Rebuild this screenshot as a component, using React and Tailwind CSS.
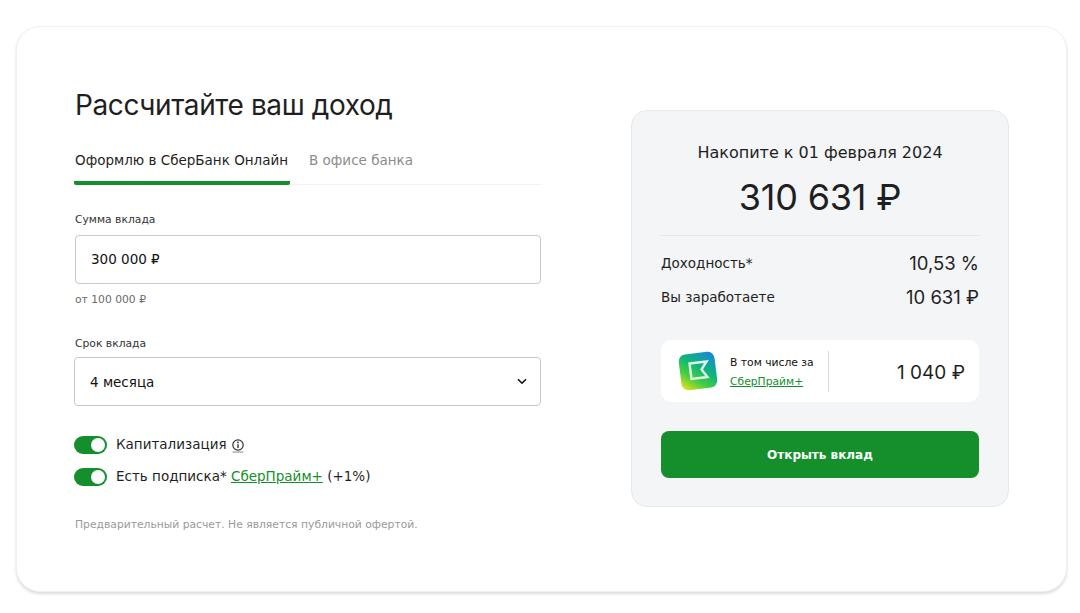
import React from "react";

const body = "font-['DejaVu_Sans','Noto_Sans',sans-serif]";
const head = "font-['Inter','Noto_Sans',sans-serif]";

function Toggle() {
  return (
    <div className="w-[33px] h-[18px] rounded-full bg-[#148F2B] flex items-center justify-end pr-[2px] shrink-0">
      <div className="w-[14px] h-[14px] rounded-full bg-white" />
    </div>
  );
}

function PrimeLogo() {
  return (
    <svg width="42" height="42" viewBox="0 0 42 42" className="shrink-0">
      <defs>
        <linearGradient id="pg" x1="0.1" y1="1" x2="0.9" y2="0">
          <stop offset="0" stopColor="#e4e21f" />
          <stop offset="0.3" stopColor="#45cf3f" />
          <stop offset="0.6" stopColor="#0db47a" />
          <stop offset="1" stopColor="#1a86e0" />
        </linearGradient>
      </defs>
      <rect x="3" y="3" width="36" height="36" rx="7" fill="url(#pg)" transform="rotate(-7 21 21)" />
      <path d="M12.5 13.5 L29.5 11.5 L24.5 19.5 L30.5 27 L14.5 29 Z" fill="none" stroke="#dff5e6" strokeWidth="2.4" strokeLinejoin="miter" />
    </svg>
  );
}

export default function App() {
  return (
    <div className={`w-[1080px] h-[613px] bg-white pt-[26px] px-4 overflow-hidden ${body}`}>
      <div className="w-[1051px] h-[566px] rounded-[24px] bg-white border border-[#f0f0f0] shadow-[0_2px_3px_rgba(0,0,0,0.14)] px-[57px] flex justify-between items-start">
        <div className="w-[467px] pt-[59px]">
          <h1 className={`${head} text-[28px] leading-[38px] font-normal text-[#1f1f22] tracking-[-0.4px] ml-[1px]`}>Рассчитайте ваш доход</h1>
          <div className="flex mt-[26px] h-[35px] border-b border-[#f2f2f2] text-[13.5px] leading-[20px]">
            <div className="w-[216px] h-[35px] border-b-[4px] border-[#148F2B] rounded-b-[2px] pl-[1px] text-[#1f1f22] whitespace-nowrap">Оформлю в СберБанк Онлайн</div>
            <div className="ml-[19px] text-[#8c8c8c] whitespace-nowrap">В офисе банка</div>
          </div>
          <div className="mt-[27px] ml-[1px] text-[10.75px] leading-[16px] text-[#333]">Сумма вклада</div>
          <div className="mt-[7px] ml-[1px] h-[49px] rounded-[4px] border border-[#c8c8c8] flex items-center pl-[15px] text-[13.5px] text-[#111]">300 000 ₽</div>
          <div className="mt-[8px] ml-[1px] text-[10.75px] leading-[16px] text-[#6b6b6b]">от 100 000 ₽</div>
          <div className="mt-[28px] ml-[1px] text-[10.75px] leading-[16px] text-[#333]">Срок вклада</div>
          <div className="mt-[5px] h-[49px] rounded-[4px] border border-[#c8c8c8] flex items-center justify-between pl-[15px] pr-[13px] text-[13.5px] text-[#111]">
            <span className="mt-[2px]">4 месяца</span>
            <svg width="10" height="7" viewBox="0 0 10 7" fill="none"><path d="M1 1.2 L5 5.2 L9 1.2" stroke="#111" strokeWidth="1.6" /></svg>
          </div>
          <div className="mt-[30px] flex items-center gap-[9px] h-[18px] text-[13.5px] text-[#1f1f22]">
            <Toggle />
            <span className="whitespace-nowrap -mt-[2px]">Капитализация</span>
            <svg width="14" height="15" viewBox="0 0 14 15" fill="none" className="-ml-[5px]">
              <circle cx="7" cy="7" r="5.2" stroke="#333" strokeWidth="1.2" />
              <path d="M7 6.2 V10" stroke="#333" strokeWidth="1.4" />
              <circle cx="7" cy="4.4" r="0.9" fill="#333" />
              <path d="M1.5 14 H12.5" stroke="#888" strokeWidth="1" />
            </svg>
          </div>
          <div className="mt-[14px] flex items-center gap-[9px] h-[18px] text-[13.5px] text-[#1f1f22] whitespace-nowrap">
            <Toggle />
            <span className="-mt-[2px]">Есть подписка* <a className="text-[#148F2B] underline">СберПрайм+</a> (+1%)</span>
          </div>
          <div className="mt-[31px] ml-[1px] text-[10.75px] leading-[16px] text-[#9a9a9a]">Предварительный расчет. Не является публичной офертой.</div>
        </div>

        <div className="w-[378px] h-[397px] mt-[83px] rounded-[16px] bg-[#F3F5F7] border border-[#e6e8ea] px-[29px] pt-[31px]">
          <div className="text-center text-[16px] leading-[22px] text-[#1f1f22]">Накопите к 01 февраля 2024</div>
          <div className={`${head} text-center text-[36px] leading-[44px] mt-[11px] text-[#1f1f22] font-normal tracking-[-0.2px]`}>310 631 ₽</div>
          <div className="h-px bg-[#e4e6e8] mt-[16px]" />
          <div className="flex justify-between items-center mt-[16px] h-[24px]">
            <span className="text-[13.5px] text-[#1f1f22] -mt-[2px]">Доходность*</span>
            <span className={`${head} text-[18.5px] text-[#1f1f22]`}>10,53 %</span>
          </div>
          <div className="flex justify-between items-center mt-[10px] h-[24px]">
            <span className="text-[13.5px] text-[#1f1f22] -mt-[2px]">Вы заработаете</span>
            <span className={`${head} text-[18.5px] text-[#1f1f22]`}>10 631 ₽</span>
          </div>
          <div className="mt-[30px] h-[62px] rounded-[10px] bg-white flex items-center pl-[16px] pr-[14px]">
            <PrimeLogo />
            <div className="ml-[11px] mt-[2px] text-[10.75px] leading-[19px] w-[98px]">
              <div className="text-[#111] whitespace-nowrap">В том числе за</div>
              <a className="text-[#148F2B] underline whitespace-nowrap">СберПрайм+</a>
            </div>
            <div className="w-px h-[41px] bg-[#d9d9d9]" />
            <div className={`${head} ml-auto mt-[4px] text-[19px] text-[#1f1f22]`}>1 040 ₽</div>
          </div>
          <div className="mt-[29px] h-[47px] rounded-[8px] bg-[#148F2B] flex items-center justify-center text-white text-[12px] font-bold">Открыть вклад</div>
        </div>
      </div>
    </div>
  );
}
